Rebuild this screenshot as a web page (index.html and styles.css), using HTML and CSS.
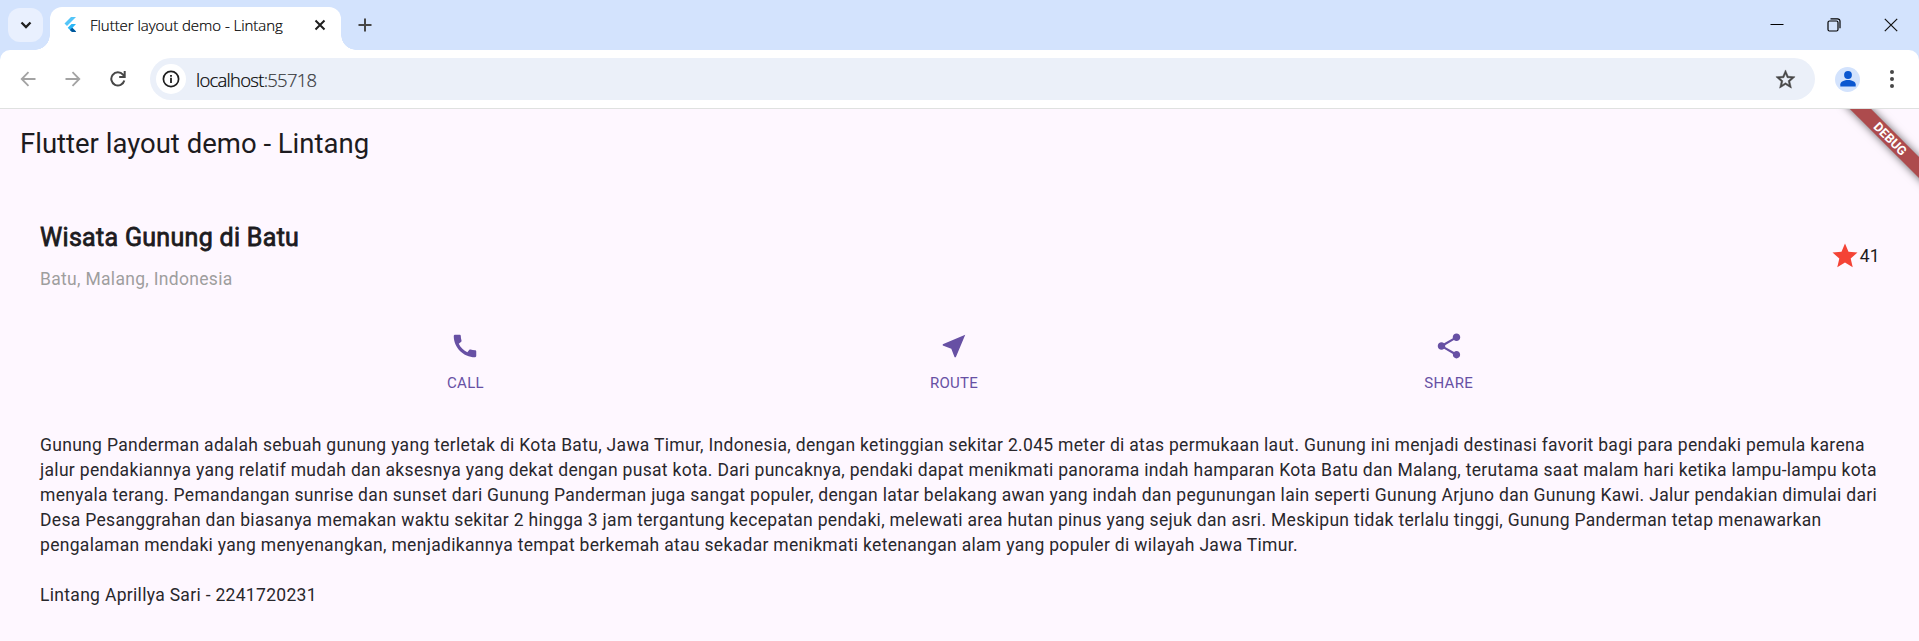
FILE: index.html
```html
<!DOCTYPE html>
<html lang="id">
<head>
<meta charset="utf-8">
<title>Flutter layout demo - Lintang</title>
<link rel="stylesheet" href="styles.css">
</head>
<body>
<div class="browser">
  <header class="tabstrip">
    <button class="tab-search" aria-label="Search tabs">
      <svg width="12" height="8" viewBox="0 0 12 8"><path d="M1.500 1.500 6 6l4.500-4.500" fill="none" stroke="#1f1f1f" stroke-width="2.300"/></svg>
    </button>
    <div class="tab">
      <svg class="favicon" width="13" height="16" viewBox="0 0 13 16"><path d="M7 0h5L3 9 .5 6.500z" fill="#54c5f8"/><path d="M7.500 7H12L8.500 10.700 12 14.500H7.500L3.700 10.700z" fill="#29b6f6"/><path d="M8.200 10.700 12 14.500v.5H8L5.900 12.900z" fill="#01579b"/></svg>
      <span class="tab-title">Flutter layout demo - Lintang</span>
      <svg class="tab-close" width="12" height="12" viewBox="0 0 12 12"><path d="m1.500 1.500 9 9m0-9-9 9" stroke="#1f1f1f" stroke-width="2"/></svg>
    </div>
    <svg class="new-tab" width="14" height="14" viewBox="0 0 14 14"><path d="M7 .5v13M.5 7h13" stroke="#474747" stroke-width="2"/></svg>
    <div class="window-controls">
      <svg width="14" height="14" viewBox="0 0 14 14"><path d="M.5 6.500h13" stroke="#000"/></svg>
      <svg width="14" height="14" viewBox="0 0 14 14" fill="none" stroke="#000" stroke-width="1.200"><rect x="1" y="3" width="10" height="10" rx="1.500"/><path d="M3.500.8h7a2.500 2.500 0 0 1 2.500 2.500v7"/></svg>
      <svg width="14" height="14" viewBox="0 0 14 14"><path d="m.8.800 12.400 12.400m0-12.400L.8 13.200" stroke="#111" stroke-width="1.200"/></svg>
    </div>
  </header>
  <div class="toolbar">
    <nav class="nav">
      <svg width="16" height="16" viewBox="0 0 16 16" fill="none" stroke="#a3a3a3" stroke-width="1.800"><path d="M15.500 8H2M8.500 1.200 1.700 8l6.800 6.800"/></svg>
      <svg width="16" height="16" viewBox="0 0 16 16" fill="none" stroke="#a3a3a3" stroke-width="1.800"><path d="M.5 8H14M7.500 1.200 14.300 8l-6.800 6.800"/></svg>
      <svg width="16" height="16" viewBox="0 0 16 16" fill="none" stroke="#474747" stroke-width="2"><path d="M14.300 9.500A6.600 6.600 0 1 1 13 3.700L14.500 5.500M14.700 0v6H9.200"/></svg>
    </nav>
    <div class="omnibox">
      <span class="site-info"><svg width="18" height="18" viewBox="0 0 18 18"><circle cx="9" cy="9" r="7.600" fill="none" stroke="#1f1f1f" stroke-width="1.700"/><path d="M9 7.800V13M9 4.900v1.800" stroke="#1f1f1f" stroke-width="1.800"/></svg></span>
      <span class="url">localhost<span class="port">:55718</span></span>
      <svg class="bookmark" width="23" height="23" viewBox="0 0 24 24"><path fill="#474747" stroke="#474747" stroke-width=".5" d="m22 9.240-7.190-.62L12 2 9.190 8.630 2 9.240l5.460 4.730L5.820 21 12 17.270 18.180 21l-1.630-7.030L22 9.240zM12 15.400l-3.760 2.270 1-4.280-3.320-2.880 4.380-.38L12 6.100l1.710 4.040 4.380.38-3.320 2.880 1 4.280L12 15.400z"/></svg>
    </div>
    <span class="avatar"><svg width="24" height="24" viewBox="0 0 24 24" fill="#0b57d0"><circle cx="12" cy="8" r="3.900"/><path d="M4.300 19.500v-2.200c0-2.500 4-4.300 7.700-4.300s7.700 1.800 7.700 4.300v2.200z"/></svg></span>
    <svg class="menu" width="6" height="20" viewBox="0 0 6 20" fill="#474747"><circle cx="3" cy="3" r="2"/><circle cx="3" cy="10" r="2"/><circle cx="3" cy="17" r="2"/></svg>
  </div>
  <main class="app">
    <h1 class="app-bar">Flutter layout demo - Lintang</h1>
    <section class="title-section">
      <div>
        <h2 class="place">Wisata Gunung di Batu</h2>
        <p class="location">Batu, Malang, Indonesia</p>
      </div>
      <div class="rating">
        <svg width="30" height="30" viewBox="0 0 24 24" fill="#f44336"><path d="M12 17.270 18.180 21l-1.640-7.030L22 9.240l-7.190-.61L12 2 9.190 8.630 2 9.240l5.460 4.730L5.820 21z"/></svg>
        <span>41</span>
      </div>
    </section>
    <section class="actions">
      <div class="action">
        <svg width="30" height="30" viewBox="0 0 24 24"><path d="M20.010 15.380c-1.230 0-2.420-.2-3.530-.56-.35-.12-.74-.03-1.010.24l-1.570 1.970c-2.830-1.350-5.480-3.900-6.890-6.830l1.950-1.660c.27-.28.35-.67.240-1.020-.37-1.110-.56-2.300-.56-3.530 0-.54-.45-.99-.99-.99H4.190C3.650 3 3 3.240 3 3.990 3 13.280 10.730 21 20.010 21c.71 0 .99-.63.990-1.180v-3.450c0-.54-.45-.99-.99-.99z"/></svg>
        <span>CALL</span>
      </div>
      <div class="action">
        <svg width="30" height="30" viewBox="0 0 24 24"><path d="M21 3 3 10.530v.98l6.840 2.650L12.480 21h.98L21 3z"/></svg>
        <span>ROUTE</span>
      </div>
      <div class="action">
        <svg width="30" height="30" viewBox="0 0 24 24"><path d="M18 16.080c-.76 0-1.440.3-1.960.77L8.910 12.700c.05-.23.090-.46.090-.7s-.04-.47-.09-.7l7.050-4.110c.54.500 1.250.810 2.040.810 1.660 0 3-1.340 3-3s-1.340-3-3-3-3 1.340-3 3c0 .24.040.47.090.7L8.040 9.810C7.500 9.310 6.790 9 6 9c-1.660 0-3 1.340-3 3s1.340 3 3 3c.79 0 1.500-.31 2.040-.81l7.120 4.160c-.05.21-.08.430-.08.650 0 1.610 1.310 2.920 2.920 2.920s2.920-1.310 2.920-2.920-1.310-2.920-2.920-2.920z"/></svg>
        <span>SHARE</span>
      </div>
    </section>
    <section class="description">
      <p>Gunung Panderman adalah sebuah gunung yang terletak di Kota Batu, Jawa Timur, Indonesia, dengan ketinggian sekitar 2.045 meter di atas permukaan laut. Gunung ini menjadi destinasi favorit bagi para pendaki pemula karena jalur pendakiannya yang relatif mudah dan aksesnya yang dekat dengan pusat kota. Dari puncaknya, pendaki dapat menikmati panorama indah hamparan Kota Batu dan Malang, terutama saat malam hari ketika lampu-lampu kota menyala terang. Pemandangan sunrise dan sunset dari Gunung Panderman juga sangat populer, dengan latar belakang awan yang indah dan pegunungan lain seperti Gunung Arjuno dan Gunung Kawi. Jalur pendakian dimulai dari Desa Pesanggrahan dan biasanya memakan waktu sekitar 2 hingga 3 jam tergantung kecepatan pendaki, melewati area hutan pinus yang sejuk dan asri. Meskipun tidak terlalu tinggi, Gunung Panderman tetap menawarkan pengalaman mendaki yang menyenangkan, menjadikannya tempat berkemah atau sekadar menikmati ketenangan alam yang populer di wilayah Jawa Timur.</p>
      <p>Lintang Aprillya Sari - 2241720231</p>
    </section>
    <div class="debug-banner">DEBUG</div>
  </main>
</div>
</body>
</html>
```

FILE: styles.css
```css
* { box-sizing: border-box; margin: 0; padding: 0; }
body { overflow: hidden; font-family: Roboto, sans-serif; }
svg { display: block; flex: none; }

.browser { display: flex; flex-direction: column; height: 641px; background: #d3e3fd; font-family: "Open Sans", sans-serif; }

/* Tab strip */
.tabstrip { display: flex; height: 50px; padding-left: 8px; }
.tab-search { width: 35px; height: 34px; margin: 8px 7px 0 0; border: 0; border-radius: 12px; background: #e9f0fe; display: grid; place-items: center; }
.tab { position: relative; display: flex; align-items: center; width: 291px; height: 43px; margin-top: 7px; padding: 0 15px 7px 14px; border-radius: 12px 12px 0 0; background: #fff; }
.tab::before, .tab::after { content: ""; position: absolute; bottom: 0; width: 15px; height: 15px; }
.tab::before { left: -15px; background: radial-gradient(circle at 0 0, transparent 14.500px, #fff 15px); }
.tab::after { right: -15px; background: radial-gradient(circle at 100% 0, transparent 14.500px, #fff 15px); }
.tab-title { margin-left: 13px; font-size: 15px; font-weight: 300; color: #000; white-space: nowrap; letter-spacing: -0.040px; -webkit-text-stroke: 0.200px #000; }
.tab-close { margin-left: auto; }
.new-tab { margin: 18px 0 0 17px; }
.window-controls { display: flex; gap: 43px; margin: 18px 21px 0 auto; }

/* Toolbar */
.toolbar { display: flex; align-items: center; height: 59px; padding: 0 24px 0 20px; border-bottom: 1px solid #dfe1e0; border-radius: 10px 10px 0 0; background: #fff; }
.nav { display: flex; gap: 29px; }
.omnibox { display: flex; align-items: center; flex: 1; height: 42px; margin-left: 24px; padding: 0 18px 0 6px; border-radius: 21px; background: #ebf0f9; }
.site-info { display: grid; place-items: center; width: 30px; height: 30px; border-radius: 50%; background: #fff; }
.url { margin-left: 10px; font-size: 18.500px; font-weight: 300; color: #000; letter-spacing: -0.750px; -webkit-text-stroke: 0.200px; }
.port { color: #36383b; }
.bookmark { margin-left: auto; }
.avatar { margin-left: 20px; width: 25px; height: 25px; border-radius: 50%; background: #d3e3fd; display: grid; place-items: center; }
.menu { margin-left: 29px; }

/* Application */
.app { position: relative; flex: 1; overflow: hidden; background: #fef7ff; color: #1d1b20; font-family: Roboto, sans-serif; }
.app-bar { height: 70px; padding-left: 20px; font-size: 27.500px; font-weight: 400; line-height: 70px; }
.title-section { display: flex; align-items: center; justify-content: space-between; padding: 41px 39px 39px 40px; }
.place { margin-bottom: 11px; font-size: 25px; font-weight: 400; line-height: 36px; letter-spacing: 0.310px; -webkit-text-stroke: 0.800px #1d1b20; }
.location { font-size: 17.500px; line-height: 25px; letter-spacing: 0.310px; color: #9e9e9e; }
.rating { display: flex; align-items: center; font-size: 17.500px; line-height: 25px; letter-spacing: 0.310px; }
.actions { display: flex; justify-content: space-evenly; padding-left: 1px; }
.action { display: flex; flex-direction: column; align-items: center; gap: 12px; color: #6750a4; font-size: 15px; line-height: 21.400px; letter-spacing: 0.310px; }
.action svg { fill: #6750a4; }
.description { padding: 39px 40px 40px; color: #29272c; font-size: 17.500px; line-height: 25px; letter-spacing: 0.310px; }
.description p + p { margin-top: 25px; }
.debug-banner { position: absolute; top: 22.500px; right: -31.500px; width: 120px; height: 15px; transform: rotate(45deg); background: #ad4b4d; box-shadow: 0 0 9px rgba(0, 0, 0, 0.600); color: #fff; font-size: 12.750px; font-weight: 700; line-height: 15px; text-align: center; text-indent: -2px; }
```
